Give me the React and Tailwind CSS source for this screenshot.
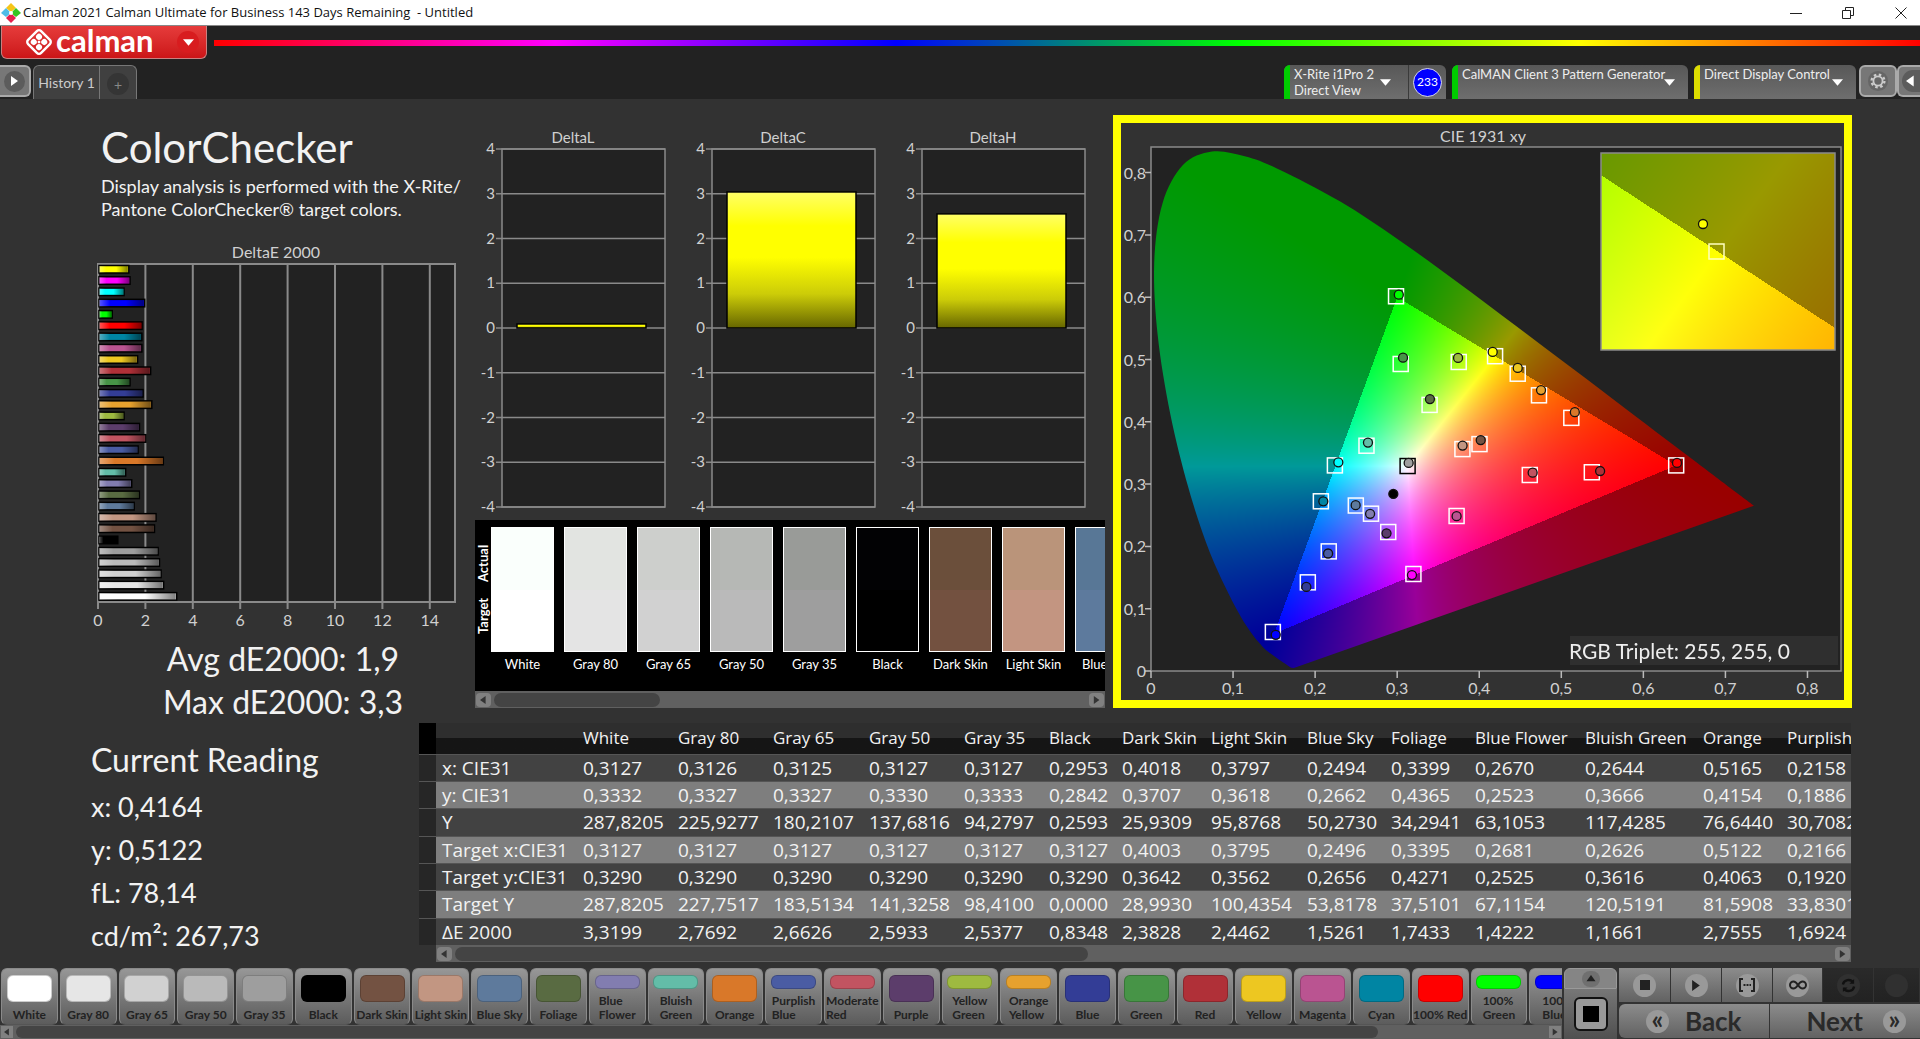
import React, { useEffect, useRef } from "react";

const patches = [
  { name: "White", color: "#ffffff", de: 3.3199 },
  { name: "Gray 80", color: "#e6e6e6", de: 2.7692 },
  { name: "Gray 65", color: "#d1d1d1", de: 2.6626 },
  { name: "Gray 50", color: "#bababa", de: 2.5933 },
  { name: "Gray 35", color: "#9e9e9e", de: 2.5377, target: [0.3127, 0.329], actual: [0.314, 0.334] },
  { name: "Black", color: "#000000", de: 0.8348, actual: [0.2953, 0.2842] },
  { name: "Dark Skin", color: "#735242", de: 2.3828, target: [0.4003, 0.3642], actual: [0.4018, 0.3707] },
  { name: "Light Skin", color: "#c29682", de: 2.4462, target: [0.3795, 0.3562], actual: [0.3797, 0.3618] },
  { name: "Blue Sky", color: "#5e7a9c", de: 1.5261, target: [0.2496, 0.2656], actual: [0.2494, 0.2662] },
  { name: "Foliage", color: "#596b42", de: 1.7433, target: [0.3395, 0.4271], actual: [0.3399, 0.4365] },
  { name: "Blue Flower", color: "#827db0", de: 1.4222, target: [0.2681, 0.2525], actual: [0.267, 0.2523] },
  { name: "Bluish Green", color: "#63bda8", de: 1.1661, target: [0.2626, 0.3616], actual: [0.2644, 0.3666] },
  { name: "Orange", color: "#d97829", de: 2.7555, target: [0.5122, 0.4063], actual: [0.5165, 0.4154] },
  { name: "Purplish Blue", color: "#4a5ca3", de: 1.6924, target: [0.2166, 0.192], actual: [0.2158, 0.1886] },
  { name: "Moderate Red", color: "#c25461", de: 2.02, target: [0.4616, 0.3146], actual: [0.4651, 0.3183] },
  { name: "Purple", color: "#5c3d6b", de: 1.75, target: [0.2891, 0.2231], actual: [0.287, 0.221] },
  { name: "Yellow Green", color: "#9eba40", de: 1.1, target: [0.375, 0.496], actual: [0.3742, 0.5025] },
  { name: "Orange Yellow", color: "#e6a12e", de: 2.27, target: [0.4728, 0.4425], actual: [0.4753, 0.451] },
  { name: "Blue", color: "#333d96", de: 1.9, target: [0.1911, 0.1423], actual: [0.1893, 0.135] },
  { name: "Green", color: "#479447", de: 1.35, target: [0.3043, 0.4928], actual: [0.3071, 0.503] },
  { name: "Red", color: "#b03038", de: 2.22, target: [0.5372, 0.319], actual: [0.5473, 0.321] },
  { name: "Yellow", color: "#edc721", de: 1.67, target: [0.4469, 0.4772], actual: [0.4469, 0.4864] },
  { name: "Magenta", color: "#ba5491", de: 1.85, target: [0.3724, 0.2488], actual: [0.3724, 0.2485] },
  { name: "Cyan", color: "#0085a3", de: 1.85, target: [0.207, 0.2724], actual: [0.21, 0.2724] },
  { name: "100% Red", color: "#ff0000", de: 1.86, target: [0.64, 0.33], actual: [0.641, 0.334] },
  { name: "100% Green", color: "#00ff00", de: 0.6, target: [0.2986, 0.6015], actual: [0.302, 0.604] },
  { name: "100% Blue", color: "#0000ff", de: 1.97, target: [0.1485, 0.0626], actual: [0.152, 0.058] },
  { name: "100% Cyan", color: "#00ffff", de: 1.1, target: [0.2241, 0.33], actual: [0.2283, 0.335] },
  { name: "100% Magenta", color: "#ff00ff", de: 1.35, target: [0.3198, 0.1557], actual: [0.318, 0.154] },
  { name: "100% Yellow", color: "#ffff00", de: 1.3, target: [0.4193, 0.5053], actual: [0.4164, 0.5122] },
];

const comparator = [
  { name: "White", actual: "bg-[#fafffc]", target: "bg-white" },
  { name: "Gray 80", actual: "bg-[#e2e4e1]", target: "bg-[#e4e4e4]" },
  { name: "Gray 65", actual: "bg-[#cdcfcc]", target: "bg-[#d1d1d1]" },
  { name: "Gray 50", actual: "bg-[#b6b8b5]", target: "bg-[#bababa]" },
  { name: "Gray 35", actual: "bg-[#999b98]", target: "bg-[#9e9e9e]" },
  { name: "Black", actual: "bg-[#020204]", target: "bg-black" },
  { name: "Dark Skin", actual: "bg-[#6b4f3b]", target: "bg-[#735140]" },
  { name: "Light Skin", actual: "bg-[#ba947a]", target: "bg-[#c39581]" },
  { name: "Blue Sky", actual: "bg-[#587796]", target: "bg-[#5d7a9d]" },
];

const columns = [
  { name: "White", width: "w-[95px]" },
  { name: "Gray 80", width: "w-[95px]" },
  { name: "Gray 65", width: "w-[96px]" },
  { name: "Gray 50", width: "w-[95px]" },
  { name: "Gray 35", width: "w-[85px]" },
  { name: "Black", width: "w-[73px]" },
  { name: "Dark Skin", width: "w-[89px]" },
  { name: "Light Skin", width: "w-[96px]" },
  { name: "Blue Sky", width: "w-[84px]" },
  { name: "Foliage", width: "w-[84px]" },
  { name: "Blue Flower", width: "w-[110px]" },
  { name: "Bluish Green", width: "w-[118px]" },
  { name: "Orange", width: "w-[84px]" },
  { name: "Purplish Blue", width: "w-[120px]" },
];

const readings = [
  ["x: CIE31", "0,3127", "0,3126", "0,3125", "0,3127", "0,3127", "0,2953", "0,4018", "0,3797", "0,2494", "0,3399", "0,2670", "0,2644", "0,5165", "0,2158"],
  ["y: CIE31", "0,3332", "0,3327", "0,3327", "0,3330", "0,3333", "0,2842", "0,3707", "0,3618", "0,2662", "0,4365", "0,2523", "0,3666", "0,4154", "0,1886"],
  ["Y", "287,8205", "225,9277", "180,2107", "137,6816", "94,2797", "0,2593", "25,9309", "95,8768", "50,2730", "34,2941", "63,1053", "117,4285", "76,6440", "30,7082"],
  ["Target x:CIE31", "0,3127", "0,3127", "0,3127", "0,3127", "0,3127", "0,3127", "0,4003", "0,3795", "0,2496", "0,3395", "0,2681", "0,2626", "0,5122", "0,2166"],
  ["Target y:CIE31", "0,3290", "0,3290", "0,3290", "0,3290", "0,3290", "0,3290", "0,3642", "0,3562", "0,2656", "0,4271", "0,2525", "0,3616", "0,4063", "0,1920"],
  ["Target Y", "287,8205", "227,7517", "183,5134", "141,3258", "98,4100", "0,0000", "28,9930", "100,4354", "53,8178", "37,5101", "67,1154", "120,5191", "81,5908", "33,8301"],
  ["ΔE 2000", "3,3199", "2,7692", "2,6626", "2,5933", "2,5377", "0,8348", "2,3828", "2,4462", "1,5261", "1,7433", "1,4222", "1,1661", "2,7555", "1,6924"],
];

// CIE 1931 spectral locus
const locus = [
  [0.1741, 0.005], [0.1714, 0.0051], [0.1689, 0.0069], [0.1644, 0.0109], [0.1566, 0.0177],
  [0.144, 0.0297], [0.1355, 0.0399], [0.1241, 0.0578], [0.1096, 0.0868], [0.0913, 0.1327],
  [0.0687, 0.2007], [0.0454, 0.295], [0.0235, 0.4127], [0.0082, 0.5384], [0.0039, 0.6548],
  [0.0139, 0.7502], [0.0389, 0.812], [0.0743, 0.8338], [0.1142, 0.8262], [0.1547, 0.8059],
  [0.2296, 0.7543], [0.3016, 0.6923], [0.3731, 0.6245], [0.4441, 0.5547], [0.5125, 0.4866],
  [0.5752, 0.4242], [0.627, 0.3725], [0.6658, 0.334], [0.6915, 0.3083], [0.719, 0.2809],
  [0.7347, 0.2653],
];

// xy to RGB, scaled so that the largest channel is full. Out of gamut is dimmed.
function xyToRgb(x, y) {
  const z = 1 - x - y;
  const rgb = [
    3.2406 * x - 1.5372 * y - 0.4986 * z,
    -0.9689 * x + 1.8758 * y + 0.0415 * z,
    0.0557 * x - 0.204 * y + 1.057 * z,
  ];
  const level = Math.min(...rgb) < 0 ? 153 : 255;
  const max = Math.max(...rgb);
  return rgb.map((c) => (Math.max(c, 0) / max) * level);
}

function GamutCanvas({ width, height, x0, x1, y0, y1, clipped }) {
  const ref = useRef(null);

  useEffect(() => {
    const ctx = ref.current.getContext("2d");
    const image = ctx.createImageData(width, height);
    for (let j = 0; j < height; j++) {
      for (let i = 0; i < width; i++) {
        const x = x0 + ((i + 0.5) / width) * (x1 - x0);
        const y = y1 - ((j + 0.5) / height) * (y1 - y0);
        const [r, g, b] = xyToRgb(x, y);
        image.data.set([r, g, b, 255], (j * width + i) * 4);
      }
    }
    ctx.putImageData(image, 0, 0);

    if (clipped) {
      const pts = locus.map(([x, y]) => [
        ((x - x0) / (x1 - x0)) * width,
        ((y1 - y) / (y1 - y0)) * height,
      ]);
      // Catmull-Rom through the points
      ctx.globalCompositeOperation = "destination-in";
      ctx.beginPath();
      ctx.moveTo(...pts[0]);
      for (let i = 0; i < pts.length - 1; i++) {
        const before = pts[Math.max(i - 1, 0)];
        const from = pts[i];
        const to = pts[i + 1];
        const after = pts[Math.min(i + 2, pts.length - 1)];
        ctx.bezierCurveTo(
          from[0] + (to[0] - before[0]) / 6,
          from[1] + (to[1] - before[1]) / 6,
          to[0] - (after[0] - from[0]) / 6,
          to[1] - (after[1] - from[1]) / 6,
          to[0],
          to[1]
        );
      }
      ctx.closePath();
      ctx.fill();
    }
  }, [width, height, x0, x1, y0, y1, clipped]);

  return <canvas ref={ref} width={width} height={height} className="block w-full h-full" />;
}

function Triangle({ className, dir }) {
  const d = {
    left: "M7 0 L0 5 L7 10 Z",
    right: "M1 0 L8 5 L1 10 Z",
    down: "M0 2 L10 2 L5 8 Z",
    up: "M0 8 L10 8 L5 1 Z",
  }[dir];
  return (
    <svg viewBox="0 0 10 10" className={className} fill="currentColor" aria-hidden="true">
      <path d={d} />
    </svg>
  );
}

function ScrollBar({ thumb, label }) {
  return (
    <div className="flex h-[17px] items-center gap-[3px] bg-[#606060] px-px" aria-label={label}>
      <button aria-label="Scroll left" className="flex h-[14px] w-[15px] items-center justify-center rounded-sm bg-[#808080] text-[#333]">
        <Triangle dir="left" className="h-[10px] w-[8px]" />
      </button>
      <div className="h-[14px] flex-1">
        <div className={`h-full rounded-lg bg-[#444] ${thumb}`} />
      </div>
      <button aria-label="Scroll right" className="flex h-[14px] w-[15px] items-center justify-center rounded-sm bg-[#808080] text-[#333]">
        <Triangle dir="right" className="h-[10px] w-[8px]" />
      </button>
    </div>
  );
}

function TitleBar() {
  return (
    <header className="flex h-[26px] items-center border-b border-[#888] bg-white text-[#111]">
      <svg viewBox="0 0 20 20" className="ml-px h-5 w-5" aria-hidden="true">
        <path d="M10 0 L15 5 L10 9 L5 5 Z" fill="#f5c518" />
        <path d="M5 5 L10 10 L5 14 L0 10 Z" fill="#4fbce8" />
        <path d="M15 5 L20 10 L15 14 L10 10 Z" fill="#35c421" />
        <path d="M10 10 L15 15 L10 20 L5 15 Z" fill="#e5204d" />
        <circle cx="10" cy="10" r="2" fill="#fff" />
      </svg>
      <span className="ml-[2px] flex-1 whitespace-pre font-['Open_Sans',sans-serif] text-[13px]">
        Calman 2021 Calman Ultimate for Business 143 Days Remaining{"  "}- Untitled
      </span>
      <div className="flex items-center">
        <button aria-label="Minimize" className="flex w-[52px] justify-center">
          <svg viewBox="0 0 12 12" className="h-3 w-3" stroke="#222" fill="none"><path d="M0 6.5 H12" /></svg>
        </button>
        <button aria-label="Restore" className="flex w-[52px] justify-center">
          <svg viewBox="0 0 12 12" className="h-3 w-3" stroke="#222" fill="none">
            <path d="M.5 3.5 H8.5 V11.5 H.5 Z M3.5 3.5 V.5 H11.5 V8.5 H8.5" />
          </svg>
        </button>
        <button aria-label="Close" className="flex w-[46px] justify-center pl-2">
          <svg viewBox="0 0 12 12" className="h-3 w-3" stroke="#222" fill="none"><path d="M.5 .5 L11.5 11.5 M11.5 .5 L.5 11.5" /></svg>
        </button>
      </div>
    </header>
  );
}

function LogoBar() {
  return (
    <div className="flex h-[39px] items-start">
      <button className="flex h-[33px] w-[206px] ml-px items-center rounded-b-md border border-t-0 border-[#c98080] bg-linear-to-b from-[#e63b3b] to-[#cc1417] text-white">
        <svg viewBox="0 0 28 28" className="ml-[23px] h-[28px] w-[28px]" aria-hidden="true">
          <g transform="rotate(45 14 14)">
            <rect x="4.800" y="4.800" width="18.400" height="18.400" rx="3" fill="none" stroke="#fff" strokeWidth="2.400" />
            <circle cx="10.300" cy="10.300" r="3" fill="#fff" />
            <circle cx="17.700" cy="10.300" r="3" fill="#fff" />
            <circle cx="10.300" cy="17.700" r="3" fill="#fff" />
            <circle cx="17.700" cy="17.700" r="3" fill="#fff" />
            <circle cx="14" cy="14" r="1.400" fill="#fff" />
          </g>
        </svg>
        <span className="ml-[3px] w-[121px] pb-1 text-left text-[31px] leading-[28px] font-bold">calman</span>
        <span className="flex h-[22px] w-[22px] items-center justify-center rounded-full bg-[#d81c1f]">
          <Triangle dir="down" className="h-[11px] w-[11px]" />
        </span>
      </button>
      <div className="ml-[7px] mt-[14px] h-[6px] flex-1 bg-[linear-gradient(90deg,#f00_0%,#f0f_20%,#00f_40%,#0f0_60%,#ff0_80%,#f00_100%)]" />
    </div>
  );
}

function DeviceTab({ lines, accent, width, children }) {
  return (
    <div className={`flex h-[34px] overflow-hidden rounded-t-md bg-linear-to-b from-[#585858] to-[#6e6e6e] ${width}`}>
      <div className={`w-[6px] shrink-0 ${accent}`} />
      <button className="flex min-w-0 flex-1 items-center justify-between pl-1 pr-2 text-left text-[13px] leading-[16px] text-[#eee]">
        <span className="w-0 flex-1 self-start pt-px whitespace-nowrap">
          {lines.map((line) => (
            <span key={line} className="block">{line}</span>
          ))}
        </span>
        <span className="flex h-[22px] w-[22px] shrink-0 items-center justify-center rounded-full text-white">
          <Triangle dir="down" className="h-[11px] w-[11px]" />
        </span>
      </button>
      {children}
    </div>
  );
}

function TabRow() {
  return (
    <div className="flex h-[34px] items-start">
      <button aria-label="Show layout panel" className="flex h-[32px] w-[31px] items-center justify-center rounded-r-md border-2 border-l-0 border-[#aaa] bg-[#777] text-white">
        <span className="flex h-[21px] w-[21px] items-center justify-center rounded-full bg-[#5c5c5c]">
          <Triangle dir="right" className="h-[12px] w-[10px]" />
        </span>
      </button>
      <div className="ml-[2px] flex h-[34px] rounded-t-md border border-b-0 border-[#777] bg-[#404040] text-[14px] text-[#ccc]">
        <button className="w-[66px] border-r border-[#777] whitespace-nowrap">History 1</button>
        <button aria-label="Add history" className="flex w-[36px] items-center justify-center">
          <span className="mt-[3px] flex h-[22px] w-[22px] items-center justify-center rounded-full bg-[#353535] text-[#888]">+</span>
        </button>
      </div>
      <div className="ml-auto flex">
        <DeviceTab lines={["X-Rite i1Pro 2", "Direct View"]} accent="bg-[#0c0]" width="w-[162px]">
          <div className="ml-1 flex w-[38px] items-center justify-center border-l border-[#3a3a3a]">
            <span className="flex h-[29px] w-[29px] items-center justify-center rounded-full border border-[#ddd] bg-[#00f] text-[12px] text-white">233</span>
          </div>
        </DeviceTab>
        <div className="w-[6px]" />
        <DeviceTab lines={["CalMAN Client 3 Pattern Generator"]} accent="bg-[#0c0]" width="w-[236px]" />
        <div className="w-[6px]" />
        <DeviceTab lines={["Direct Display Control"]} accent="bg-[#dd0]" width="w-[162px]" />
        <button aria-label="Settings" className="ml-[3px] flex h-[32px] w-[38px] items-center justify-center rounded-md border-2 border-[#aaa] bg-[#777]">
          <svg viewBox="0 0 24 24" className="h-[22px] w-[22px]" aria-hidden="true">
            <circle cx="12" cy="12" r="11" fill="#666" />
            <circle cx="12" cy="12" r="5" fill="none" stroke="#ccc" strokeWidth="2" />
            <circle cx="12" cy="12" r="7" fill="none" stroke="#ccc" strokeWidth="2.500" strokeDasharray="2.750 2.750" />
          </svg>
        </button>
        <button aria-label="Show side panel" className="flex h-[32px] w-[23px] items-center justify-end rounded-l-md border-2 border-r-0 border-[#aaa] bg-[#777] text-white">
          <span className="flex h-[22px] w-[18px] items-center justify-center rounded-l-full bg-[#5c5c5c]">
            <Triangle dir="left" className="h-[14px] w-[11px]" />
          </span>
        </button>
      </div>
    </div>
  );
}

function DeltaEChart() {
  const bars = [...patches].reverse();
  return (
    <svg viewBox="0 0 380 390" className="w-[380px]" fontSize="16" fill="#d0d0d0" role="img" aria-label="DeltaE 2000">
      <defs>
        <linearGradient id="barShade">
          <stop offset="0" stopColor="#fff" stopOpacity=".35" />
          <stop offset=".25" stopColor="#fff" stopOpacity="0" />
          <stop offset=".6" stopColor="#000" stopOpacity="0" />
          <stop offset="1" stopColor="#000" stopOpacity=".5" />
        </linearGradient>
      </defs>
      <text x="191" y="18" textAnchor="middle">DeltaE 2000</text>
      <rect x="13" y="24" width="357" height="338" fill="#222" stroke="#8a8a8a" strokeWidth="2" />
      {[0, 2, 4, 6, 8, 10, 12, 14].map((v) => (
        <g key={v}>
          <path d={`M${13 + v * 23.7} 24 V369`} stroke="#8a8a8a" strokeWidth="2" />
          <text x={13 + v * 23.7} y="386" textAnchor="middle">{v}</text>
        </g>
      ))}
      {bars.map((bar, i) => (
        <g key={bar.name}>
          <rect x="14" y={25.500 + i * 11.28} width={bar.de * 23.7 - 1} height="7.500" fill={bar.color} stroke="#000" strokeWidth="1.500" />
          <rect x="14" y={26 + i * 11.28} width={bar.de * 23.7 - 2} height="6.500" fill="url(#barShade)" />
        </g>
      ))}
    </svg>
  );
}

function DeltaChart({ title, value }) {
  const zero = 206;
  const unit = 44.75;
  return (
    <svg viewBox="0 0 210 392" className="min-w-0 flex-1" fontSize="15" fill="#d0d0d0" role="img" aria-label={title}>
      <defs>
        <linearGradient id="yellowBar" x1="0" y1="0" x2="0" y2="1">
          <stop offset="0" stopColor="#ffff66" />
          <stop offset=".25" stopColor="#ffff00" />
          <stop offset=".48" stopColor="#ffff00" />
          <stop offset=".75" stopColor="#cccc08" />
          <stop offset="1" stopColor="#666600" />
        </linearGradient>
      </defs>
      <text x="98" y="21" textAnchor="middle">{title}</text>
      <rect x="27" y="27" width="163" height="358" fill="#222" stroke="#8a8a8a" strokeWidth="1.500" />
      {[4, 3, 2, 1, 0, -1, -2, -3, -4].map((v) => (
        <g key={v}>
          <path d={`M21 ${zero - v * unit} H190`} stroke="#8a8a8a" strokeWidth="1.500" />
          <text x="20" y={zero + 5 - v * unit} textAnchor="end">{v}</text>
        </g>
      ))}
      <rect x="42" y={zero - value * unit} width="129" height={value * unit} fill="url(#yellowBar)" stroke="#000" strokeWidth="1.500" />
    </svg>
  );
}

function Comparator() {
  return (
    <section>
      <div className="flex h-[171px] overflow-hidden bg-black pt-[7px] text-white">
        <div className="flex h-[125px] w-[16px] shrink-0 rotate-180 items-center justify-between px-0 pt-[10px] pb-[10px] text-[13px] leading-[16px] font-bold [writing-mode:vertical-rl]">
          <span className="flex-1 text-center">Target</span>
          <span className="flex-1 text-center">Actual</span>
        </div>
        <div className="flex gap-[10px]">
          {comparator.map((swatch) => (
            <div key={swatch.name} className="w-[63px] shrink-0 text-center text-[13px] leading-[24px]">
              <div className="flex h-[125px] flex-col border border-white">
                <div className={`flex-1 ${swatch.actual}`} />
                <div className={`flex-1 ${swatch.target}`} />
              </div>
              <span className="whitespace-nowrap">{swatch.name}</span>
            </div>
          ))}
        </div>
      </div>
      <ScrollBar thumb="w-[28%]" label="Swatches" />
    </section>
  );
}

function CieChart() {
  // plot origin and scale inside the svg
  const px = (x) => 30 + x * 820.6;
  const py = (y) => 548 - y * 623;
  const inset = { x: 480, y: 30, width: 234, height: 197 };

  return (
    <section className="min-w-0 self-start border-8 border-[#ff0] bg-[#323232]">
      <svg viewBox="0 0 723 577" className="block w-full" fontSize="16" fill="#d0d0d0" role="img" aria-label="CIE 1931 xy">
        <text x="362" y="19" textAnchor="middle">CIE 1931 xy</text>
        <rect x="30" y="24" width="690" height="524" fill="#222" stroke="#8a8a8a" strokeWidth="1.500" />
        {[0, 1, 2, 3, 4, 5, 6, 7, 8].map((v) => (
          <g key={v}>
            <path d={`M24 ${py(v / 10)} H30 M${px(v / 10)} 548 V555`} stroke="#bbb" strokeWidth="1.500" />
            <text x="25" y={py(v / 10) + 6} textAnchor="end">{v === 0 ? "0" : `0,${v}`}</text>
            <text x={px(v / 10)} y="571" textAnchor="middle">{v === 0 ? "0" : `0,${v}`}</text>
          </g>
        ))}
        <foreignObject x="31" y="25" width="688" height="522">
          <GamutCanvas width={688} height={522} x0={1 / 820.6} x1={689 / 820.6} y0={1 / 623} y1={523 / 623} clipped />
        </foreignObject>
        {patches.filter((p) => p.target).map((p) => (
          <rect
            key={p.name}
            x={px(p.target[0]) - 7.500}
            y={py(p.target[1]) - 7.500}
            width="15"
            height="15"
            fill="none"
            stroke={p.name === "Gray 35" ? "#000" : "#fff"}
            strokeWidth="1.500"
          />
        ))}
        {patches.filter((p) => p.actual).map((p) => (
          <circle key={p.name} cx={px(p.actual[0])} cy={py(p.actual[1])} r="4.500" fill={p.color} stroke="#111" strokeWidth="1.300" />
        ))}
        <foreignObject {...inset}>
          <GamutCanvas width={234} height={197} x0={0.3939} x1={0.4447} y0={0.4793} y1={0.5313} />
        </foreignObject>
        <rect {...inset} fill="none" stroke="#8a8a8a" strokeWidth="1.500" />
        <rect x="588" y="121" width="15" height="15" fill="none" stroke="#ffffc0" strokeWidth="1.500" />
        <circle cx="582" cy="101" r="4.500" fill="#ff0" stroke="#111" strokeWidth="1.300" />
        <rect x="449" y="513" width="268" height="29" fill="#2f2f2f" />
        <text x="448" y="536" fontSize="21" fill="#eee">RGB Triplet: 255, 255, 0</text>
      </svg>
    </section>
  );
}

function ReadingsTable() {
  return (
    <section className="mr-[69px] min-w-0 flex-1 font-['Open_Sans',sans-serif]">
      <div className="overflow-hidden">
        <table className="h-[222px] w-[1482px] table-fixed border-collapse text-left text-[19px] leading-[24px] whitespace-nowrap text-[#f2f2f2]">
          <thead>
            <tr className="h-[31px] bg-linear-to-b from-[#2e2e2e] from-50% to-[#151515] to-50% text-[17px]">
              <td className="w-[17px] bg-black" />
              <td className="w-[141px]" />
              {columns.map((col) => (
                <th key={col.name} scope="col" className={`pl-[6px] font-normal ${col.width}`}>{col.name}</th>
              ))}
            </tr>
          </thead>
          <tbody>
            {readings.map(([label, ...values]) => (
              <tr key={label} className="border-t border-[#555] odd:bg-[#424242] even:bg-[#7e7e7e]">
                <td className="bg-[#262626]" />
                <th scope="row" className="pl-[6px] font-normal">{label}</th>
                {values.map((value, i) => (
                  <td key={i} className="pl-[6px]">{value}</td>
                ))}
              </tr>
            ))}
          </tbody>
        </table>
      </div>
      <div className="ml-[17px]">
        <ScrollBar thumb="w-[46%]" label="Readings" />
      </div>
    </section>
  );
}

function PatchButton({ patch }) {
  const twoLines = patch.name.length > 10 || patch.name === "100% Green" || patch.name === "100% Blue";
  const label = twoLines ? patch.name.split(" ") : [patch.name];
  return (
    <button className="flex h-[57px] min-w-0 flex-1 flex-col items-center rounded-md border border-[#8a8a8a] border-b-[#555] bg-linear-to-b from-[#979797] to-[#5c5c5c] pt-[6px] text-[12px] leading-[14px] font-bold text-[#222]">
      <span
        className={`w-[45px] shrink-0 rounded-md border border-black/20 ${twoLines ? "h-[14px]" : "h-[27px]"}`}
        style={{ backgroundColor: patch.color }}
      />
      <span className="mt-auto pb-[2px] text-left whitespace-nowrap">
        {label.map((word) => (
          <span key={word} className="block">{word}</span>
        ))}
      </span>
    </button>
  );
}

function TransportButton({ label, off, children }) {
  return (
    <button
      aria-label={label}
      className={`flex h-[34px] items-center justify-center border-r border-[#333] bg-linear-to-b text-[#222] ${
        off ? "from-[#2a2a2a] to-[#222]" : "from-[#8c8c8c] to-[#626262]"
      }`}
    >
      <span className={`flex h-[23px] w-[23px] items-center justify-center rounded-full ${off ? "bg-[#303030]" : "bg-[#999]"}`}>{children}</span>
    </button>
  );
}

function Footer() {
  return (
    <footer className="flex h-[71px] bg-[#333]">
      <div className="flex min-w-0 flex-1 flex-col">
        <div className="h-[57px] overflow-hidden pl-px">
          <div className="flex w-[1585px] gap-[2px]">
            {patches.slice(0, 27).map((patch) => (
              <PatchButton key={patch.name} patch={patch} />
            ))}
          </div>
        </div>
        <div className="flex h-[14px] items-center gap-[3px] bg-[#606060] px-px">
          <button aria-label="Scroll left" className="flex h-[12px] w-[12px] items-center justify-center bg-[#808080] text-[#333]">
            <Triangle dir="left" className="h-[8px] w-[7px]" />
          </button>
          <div className="h-[12px] flex-1">
            <div className="h-full w-[89%] rounded-lg bg-[#444]" />
          </div>
          <button aria-label="Scroll right" className="flex h-[12px] w-[12px] items-center justify-center bg-[#808080] text-[#333]">
            <Triangle dir="right" className="h-[8px] w-[7px]" />
          </button>
        </div>
      </div>
      <div className="ml-[2px] flex w-[53px] flex-col">
        <button aria-label="Expand" className="flex h-[21px] items-center justify-center rounded-t-md border border-[#999] bg-[#858585] text-[#222]">
          <span className="flex h-[16px] w-[18px] items-center justify-center rounded-full bg-[#707070]">
            <Triangle dir="up" className="h-[9px] w-[10px]" />
          </span>
        </button>
        <button aria-label="Pattern window" className="flex flex-1 items-center justify-center bg-linear-to-b from-[#777] to-[#505050]">
          <span className="flex h-[34px] w-[34px] items-center justify-center rounded-md border-2 border-[#111] bg-[#999]">
            <span className="h-[16px] w-[16px] bg-black" />
          </span>
        </button>
      </div>
      <div className="ml-[2px] flex w-[301px] flex-col gap-[2px] text-[#2a2a2a]">
        <div className="grid h-[34px] grid-cols-[52px_51px_51px_50px_51px_1fr]">
          <TransportButton label="Stop"><span className="h-[10px] w-[10px] bg-[#222]" /></TransportButton>
          <TransportButton label="Read"><Triangle dir="right" className="h-[13px] w-[11px]" /></TransportButton>
          <TransportButton label="Read series">
            <svg viewBox="0 0 16 14" className="h-[14px] w-[16px]" fill="none" stroke="currentColor" strokeWidth="2">
              <path d="M4 1 H1 V13 H4 M12 1 H15 V13 H12" />
              <path d="M4.500 7 H12" strokeDasharray="2 1" />
            </svg>
          </TransportButton>
          <TransportButton label="Read continuously">
            <svg viewBox="0 0 18 10" className="h-[10px] w-[18px]" fill="none" stroke="currentColor" strokeWidth="2">
              <path d="M9 5 C7 2 6 1.500 4.500 1.500 A3.500 3.500 0 0 0 4.500 8.500 C6 8.500 7 8 9 5 C11 2 12 1.500 13.500 1.500 A3.500 3.500 0 0 1 13.500 8.500 C12 8.500 11 8 9 5 Z" />
            </svg>
          </TransportButton>
          <TransportButton label="Refresh" off>
            <svg viewBox="0 0 16 16" className="h-[15px] w-[15px]" fill="none" stroke="#111" strokeWidth="2.500">
              <path d="M2 7 A6 6 0 0 1 13 5 M14 9 A6 6 0 0 1 3 11" />
              <path d="M14 1 V6 H9 Z M2 15 V10 H7 Z" fill="#111" stroke="none" />
            </svg>
          </TransportButton>
          <TransportButton label="Record" off />
        </div>
        <div className="grid h-[34px] grid-cols-2 text-[26px] leading-[30px] font-bold">
          <button className="flex items-center justify-center gap-4 rounded-l-md border-r border-[#333] bg-linear-to-b from-[#8c8c8c] to-[#626262]">
            <span className="flex h-[23px] w-[23px] items-center justify-center rounded-full bg-[#999] pb-1">«</span>
            Back
          </button>
          <button className="flex items-center justify-end gap-5 bg-linear-to-b from-[#8c8c8c] to-[#626262] pr-[14px]">
            Next
            <span className="flex h-[23px] w-[23px] items-center justify-center rounded-full bg-[#999] pb-1">»</span>
          </button>
        </div>
      </div>
    </footer>
  );
}

export default function App() {
  return (
    <div className="flex min-h-screen flex-col overflow-hidden bg-[#222] font-['Lato',sans-serif] text-[#f2f2f2]">
      <TitleBar />
      <LogoBar />
      <TabRow />
      <main className="flex-1 bg-[#323232]">
        <div className="grid grid-cols-[475px_622fr_739fr] gap-x-[8px] pr-[68px] pt-4">
          <section className="-mr-2 pt-[8px]">
            <h1 className="ml-[101px] text-[42px] leading-[48px]">ColorChecker</h1>
            <p className="ml-[101px] mt-[4px] text-[18px] leading-[23px] whitespace-nowrap">
              Display analysis is performed with the X-Rite/
              <br />
              Pantone ColorChecker® target colors.
            </p>
            <div className="ml-[85px] mt-[19px]">
              <DeltaEChart />
            </div>
            <div className="ml-[91px] mt-[7px] w-[384px] text-center text-[32px] leading-[43px]">
              <p>Avg dE2000: 1,9</p>
              <p>Max dE2000: 3,3</p>
            </div>
          </section>
          <section className="-ml-2 min-w-0 pt-[7px]">
            <div className="flex">
              <DeltaChart title="DeltaL" value={0.09} />
              <DeltaChart title="DeltaC" value={3.04} />
              <DeltaChart title="DeltaH" value={2.55} />
            </div>
            <div className="mt-[6px]">
              <Comparator />
            </div>
          </section>
          <CieChart />
        </div>
        <div className="flex">
          <section className="w-[419px] shrink-0 pl-[91px] text-[27px] leading-[43px]">
            <h2 className="mt-[15px] mb-1 text-[32px]">Current Reading</h2>
            <p>x: 0,4164</p>
            <p>y: 0,5122</p>
            <p>fL: 78,14</p>
            <p>cd/m²: 267,73</p>
          </section>
          <ReadingsTable />
        </div>
      </main>
      <Footer />
    </div>
  );
}
